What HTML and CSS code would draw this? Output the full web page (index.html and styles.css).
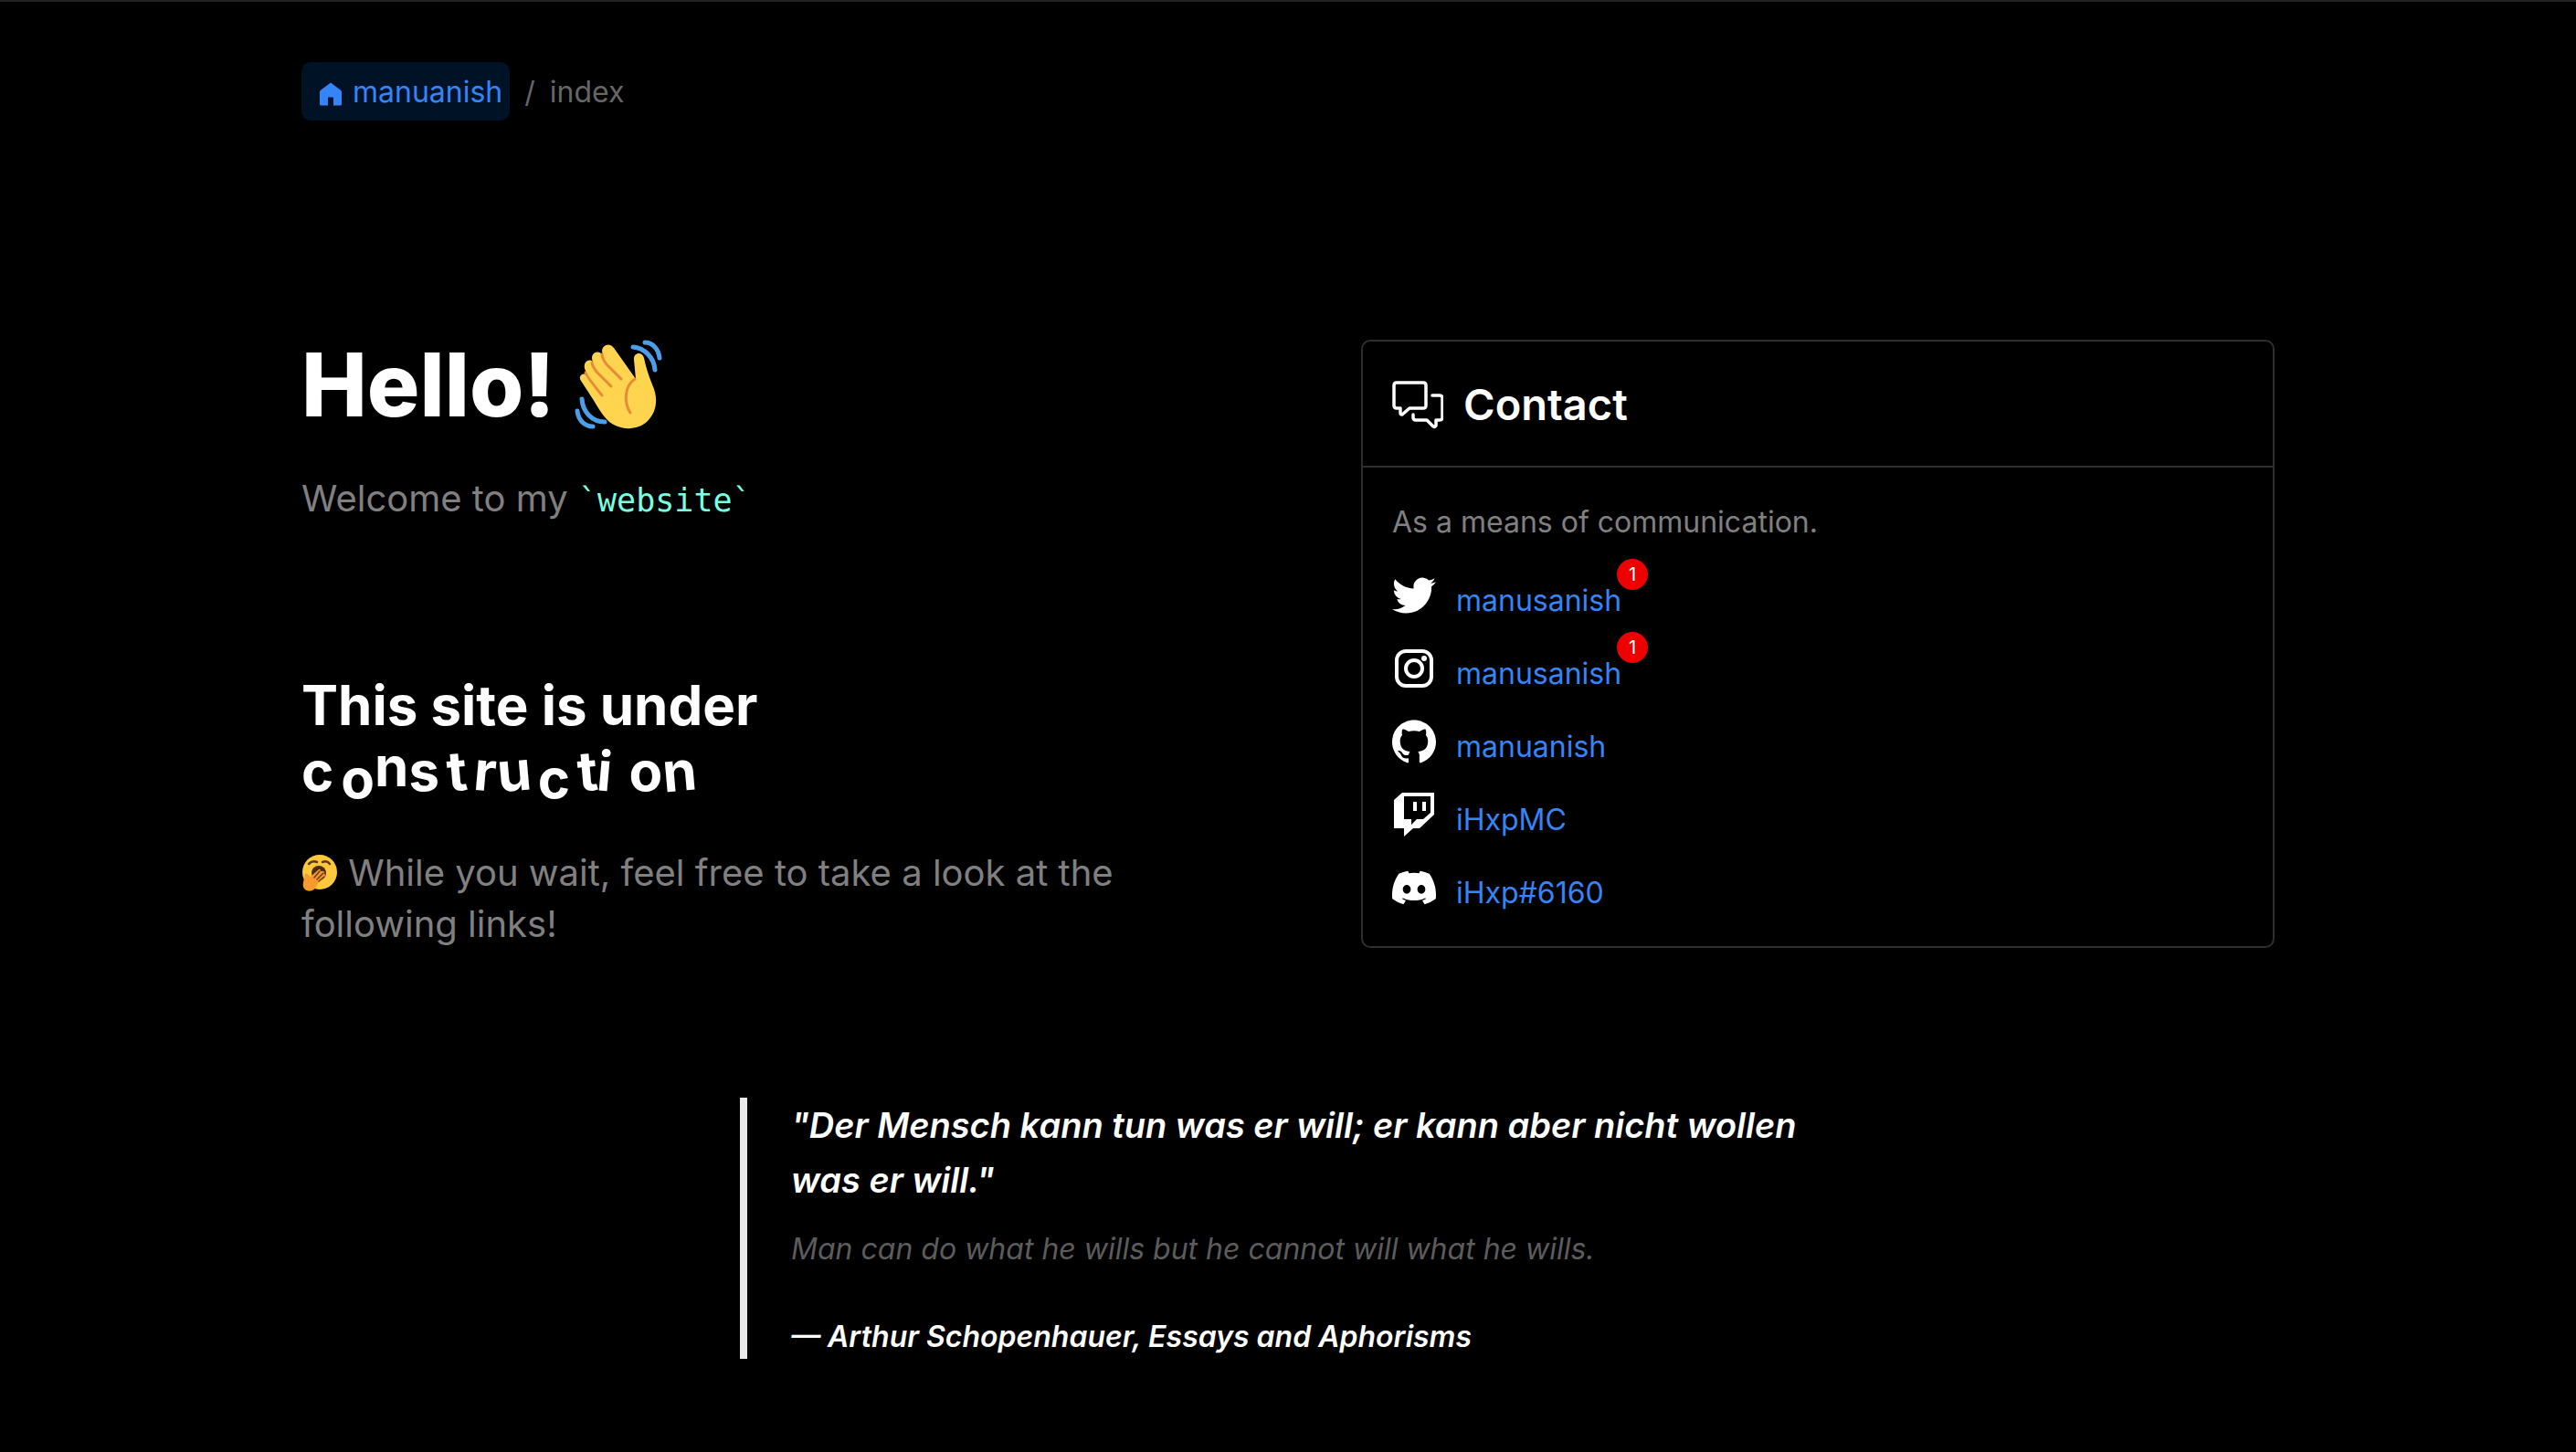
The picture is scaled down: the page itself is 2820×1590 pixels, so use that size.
FILE: index.html
```html
<!DOCTYPE html>
<html lang="en">
<head>
<meta charset="utf-8">
<meta name="viewport" content="width=device-width, initial-scale=1">
<title>manuanish</title>
<link rel="stylesheet" href="styles.css">
</head>
<body>
<div class="page">
  <nav class="crumbs" aria-label="Breadcrumb">
    <a class="crumb-home" href="#">
      <svg class="home-icon" viewBox="0 0 24 25" aria-hidden="true"><path fill="currentColor" d="M12 0 L23 8.200 Q24 9 24 10.500 V23.500 Q24 25 22.500 25 H15 V17 Q15 16 14 16 H10 Q9 16 9 17 V25 H1.500 Q0 25 0 23.500 V10.500 Q0 9 1 8.200 Z"/></svg>
      <span>manuanish</span>
    </a>
    <span>/</span>
    <span>index</span>
  </nav>

  <main class="columns">
    <section class="intro">
      <h1 class="hello">Hello!
        <svg class="wave" viewBox="0 0 96 98" role="img" aria-label="Waving hand">
          <path fill="#ffd54f" d="M7 45C3 39 10 35 14 39L12 34C8 27 14 19 20 24C16 16 25 9 31 17L31 16C27 8 37 1 43 9L67 43L65 22C64 14 74 12 76 20C78 30 81 39 85 49C92 64 90 79 80 89C69 100 48 100 36 88C30 82 25 73 20 65Z"/>
          <g fill="none" stroke="#e78b36" stroke-width="3" stroke-linecap="round"><path d="M30 16C30 20 32 23 35 27L51 43"/><path d="M19 25C19 28 21 31 24 35L40 51"/><path d="M12 36C13 40 19 47 30 61"/><path d="M66 43C54 51 54 69 61 80"/></g>
          <g fill="none" stroke="#4a9fe8" stroke-width="5" stroke-linecap="round"><path d="M64 8C76 9 87 19 88 33"/><path d="M77 3C86 3 92 11 93 20"/><path d="M8 65C9 79 19 90 33 90"/><path d="M3 78C4 88 11 95 20 95"/></g>
        </svg>
      </h1>
      <p class="lead">Welcome to my <code class="code">`website`</code></p>
      <h2 class="notice">This site is under<br><span class="letters"><span>c</span><span class="low spaced">o</span><span class="high">n</span><span>s</span><span class="left spaced">t</span><span class="right spaced">r</span><span class="left">u</span><span class="low spaced">c</span><span class="left spaced">t</span><span class="right">i</span><span class="spaced-wide">o</span><span class="left">n</span></span></h2>
      <p class="lead"><svg class="yawn" viewBox="0 0 40 40" role="img" aria-label="Yawning face"><circle cx="20" cy="19" r="19" fill="#ffc83d"/><g fill="none" stroke="#5b3a12" stroke-width="2.500" stroke-linecap="round"><path d="M8 10Q12 6 17 8M23 8Q28 6 31 10"/></g><ellipse cx="19" cy="20" rx="8" ry="8" fill="#4a2c0e"/><path fill="#f79a2e" d="M4 21C7 19 8 24 10 24L19 16Q21 15 21 18L24 18Q26 19 25 21Q27 22 25 25L18 31C16 40 7 42 3 37C0 33 3 28 4 21Z"/><g fill="none" stroke="#6b3a0c" stroke-width="1.500" stroke-linecap="round"><path d="M14 25L20 18M17 27L24 20M19 29L25 24"/></g></svg> While you wait, feel free to take a look at the following links!</p>
    </section>

    <section class="card">
      <header class="card-head">
        <svg class="chat-icon" viewBox="0 0 56 52" aria-hidden="true"><g fill="none" stroke="#fff" stroke-width="3.500" stroke-linejoin="round" stroke-linecap="round"><path d="M5 2H34Q37 2 37 5V27Q37 30 34 30H19L11 37Q9 37 9 35V30H5Q2 30 2 27V5Q2 2 5 2Z"/><path d="M44 16H52Q55 16 55 19V40Q55 43 52 43H48V49Q47 51 45 50L38 43H26Q23 43 23 40V37"/></g></svg>
        <h2 class="card-title">Contact</h2>
      </header>
      <div class="card-body">
        <p class="card-note">As a means of communication.</p>
        <ul class="contacts">
          <li><svg class="brand" viewBox="0 0 24 24" aria-hidden="true"><path fill="#fff" d="M23.953 4.570a10 10 0 01-2.825.775 4.958 4.958 0 002.163-2.723c-.951.555-2.005.959-3.127 1.184a4.920 4.920 0 00-8.384 4.482C7.690 8.095 4.067 6.130 1.640 3.162a4.822 4.822 0 00-.666 2.475c0 1.710.870 3.213 2.188 4.096a4.904 4.904 0 01-2.228-.616v.060a4.923 4.923 0 003.946 4.827 4.996 4.996 0 01-2.212.085 4.936 4.936 0 004.604 3.417 9.867 9.867 0 01-6.102 2.105c-.390 0-.779-.023-1.170-.067a13.995 13.995 0 007.557 2.209c9.053 0 13.998-7.496 13.998-13.985 0-.210 0-.420-.015-.630A9.935 9.935 0 0024 4.590z"/></svg><a href="#">manusanish<span class="badge">1</span></a></li>
          <li><svg class="brand" viewBox="0 0 48 48" aria-hidden="true"><g fill="none" stroke="#fff" stroke-width="4"><rect x="5" y="5" width="38" height="38" rx="10"/><circle cx="24" cy="24" r="9"/></g><circle cx="35" cy="13" r="3" fill="#fff"/></svg><a href="#">manusanish<span class="badge">1</span></a></li>
          <li><svg class="brand" viewBox="0 0 24 24" aria-hidden="true"><path fill="#fff" d="M12 .297c-6.630 0-12 5.373-12 12 0 5.303 3.438 9.800 8.205 11.385.600.113.820-.258.820-.577 0-.285-.010-1.040-.015-2.040-3.338.724-4.042-1.610-4.042-1.610C4.422 18.070 3.633 17.700 3.633 17.700c-1.087-.744.084-.729.084-.729 1.205.084 1.838 1.236 1.838 1.236 1.070 1.835 2.809 1.305 3.495.998.108-.776.417-1.305.760-1.605-2.665-.300-5.466-1.332-5.466-5.930 0-1.310.465-2.380 1.235-3.220-.135-.303-.540-1.523.105-3.176 0 0 1.005-.322 3.300 1.230.960-.267 1.980-.399 3-.405 1.020.006 2.040.138 3 .405 2.280-1.552 3.285-1.230 3.285-1.230.645 1.653.240 2.873.120 3.176.765.840 1.230 1.910 1.230 3.220 0 4.610-2.805 5.625-5.475 5.920.420.360.810 1.096.810 2.220 0 1.606-.015 2.896-.015 3.286 0 .315.210.690.825.570C20.565 22.092 24 17.592 24 12.297c0-6.627-5.373-12-12-12"/></svg><a href="#">manuanish</a></li>
          <li><svg class="brand" viewBox="0 0 48 48" aria-hidden="true"><path fill="#fff" fill-rule="evenodd" d="M11 0H46V24L30 39H23L13 48V39H2V8ZM13 4V29H21V35L27 29H34L42 22V4ZM23 10H27V20H23ZM33 10H37V20H33Z"/></svg><a href="#">iHxpMC</a></li>
          <li><svg class="brand" viewBox="0 0 24 24" aria-hidden="true"><path fill="#fff" d="M20.317 4.370a19.791 19.791 0 00-4.885-1.515.074.074 0 00-.079.037c-.211.375-.445.865-.608 1.250a18.270 18.270 0 00-5.487 0 12.640 12.640 0 00-.617-1.250.077.077 0 00-.079-.037A19.736 19.736 0 003.677 4.370a.070.070 0 00-.032.028C.533 9.046-.319 13.580.099 18.058a.082.082 0 00.031.056 19.900 19.900 0 005.993 3.030.078.078 0 00.084-.028c.462-.630.874-1.295 1.226-1.994a.076.076 0 00-.042-.106 13.107 13.107 0 01-1.872-.892.077.077 0 01-.008-.128c.126-.094.252-.192.372-.291a.074.074 0 01.078-.011c3.928 1.793 8.180 1.793 12.061 0a.074.074 0 01.079.010c.120.099.246.198.373.292a.077.077 0 01-.007.128 12.299 12.299 0 01-1.873.891.077.077 0 00-.041.107c.360.698.772 1.363 1.225 1.993a.076.076 0 00.084.029 19.839 19.839 0 006.002-3.030.077.077 0 00.031-.055c.500-5.177-.838-9.674-3.549-13.660a.061.061 0 00-.031-.029zM8.020 15.331c-1.183 0-2.157-1.086-2.157-2.419 0-1.333.956-2.419 2.157-2.419 1.210 0 2.176 1.095 2.157 2.419 0 1.333-.956 2.419-2.157 2.419zm7.975 0c-1.183 0-2.157-1.086-2.157-2.419 0-1.333.955-2.419 2.157-2.419 1.210 0 2.176 1.095 2.157 2.419 0 1.333-.946 2.419-2.157 2.419z"/></svg><a href="#">iHxp#6160</a></li>
        </ul>
      </div>
    </section>
  </main>

  <blockquote class="quote">
    <p class="quote-text">"Der Mensch kann tun was er will; er kann aber nicht wollen was er will."</p>
    <p class="quote-translation">Man can do what he wills but he cannot will what he wills.</p>
    <footer class="quote-source">— Arthur Schopenhauer, Essays and Aphorisms</footer>
  </blockquote>
</div>
</body>
</html>
```
FILE: styles.css
```css
* { box-sizing: border-box; }

body {
  margin: 0;
  background: #000;
  color: #fff;
  border-top: 2px solid #222;
  font-family: Inter, "Liberation Sans", sans-serif;
  font-size: 32px;
  line-height: 48px;
}

h1, h2, p, ul, blockquote { margin: 0; padding: 0; }

a { color: #3585f7; text-decoration: none; }

.page {
  max-width: 2160px;
  margin: 0 auto;
  padding: 66px 0 100px;
}

.crumbs { display: flex; align-items: center; gap: 16px; color: #666; }
.crumbs span { padding-top: 2px; }

.crumb-home {
  display: flex;
  align-items: center;
  gap: 12px;
  height: 64px;
  padding: 0 8px 0 20px;
  border-radius: 10px;
  background: #001226;
}

.home-icon { width: 24px; height: 26px; margin-top: 5px; }

.columns {
  display: grid;
  grid-template-columns: 1fr 1fr;
  gap: 160px;
  margin-top: 240px;
  align-items: start;
}

.hello { font-size: 96px; line-height: 96px; font-weight: 800; }

.wave { width: 96px; height: 98px; vertical-align: -14px; }

.lead { font-size: 40px; line-height: 56px; color: #808080; }

.hello + .lead { margin-top: 48px; }

.code {
  font-family: "DejaVu Sans Mono", monospace;
  font-size: 35px;
  color: #79ffe1;
}

.notice {
  margin: 160px 0 48px;
  font-size: 60px;
  line-height: 72px;
  font-weight: 700;
}

.letters { display: flex; }
.spaced { margin-left: 8px; }
.spaced-wide { margin-left: 18px; }
.low { transform: translateY(8px); }
.high { transform: translateY(-5px); }
.left { transform: rotate(-5deg); }
.right { transform: rotate(5deg); }

.yawn { width: 40px; height: 40px; vertical-align: -6px; }

.card { border: 2px solid #2e2e2e; border-radius: 10px; }

.card-head {
  display: flex;
  align-items: center;
  gap: 22px;
  padding: 33px 32px 31px;
  border-bottom: 2px solid #2e2e2e;
}

.chat-icon { width: 56px; height: 54px; }

.card-title { font-size: 47px; line-height: 72px; font-weight: 600; }

.card-body { padding: 36px 32px 34px; }

.card-note { color: #808080; }

.contacts {
  display: grid;
  gap: 26px;
  margin-top: 32px;
  list-style: none;
}

.contacts li { display: flex; gap: 22px; }
.contacts a { position: relative; padding-top: 6px; }

.brand { width: 48px; height: 48px; }

.badge {
  position: absolute;
  left: 100%;
  top: -16px;
  width: 34px;
  height: 34px;
  margin-left: -5px;
  border-radius: 50%;
  background: #e00;
  color: #fff;
  font-size: 20px;
  line-height: 34px;
  text-align: center;
}

.quote {
  max-width: 1200px;
  margin: 162px auto 0;
  padding: 0 0 0 48px;
  border-left: 8px solid #eaeaea;
  font-style: italic;
}

.quote-text { font-size: 38px; line-height: 60px; font-weight: 600; }
.quote-translation { margin-top: 22px; color: #5c5c5c; }
.quote-source { margin-top: 48px; font-weight: 600; }
```
